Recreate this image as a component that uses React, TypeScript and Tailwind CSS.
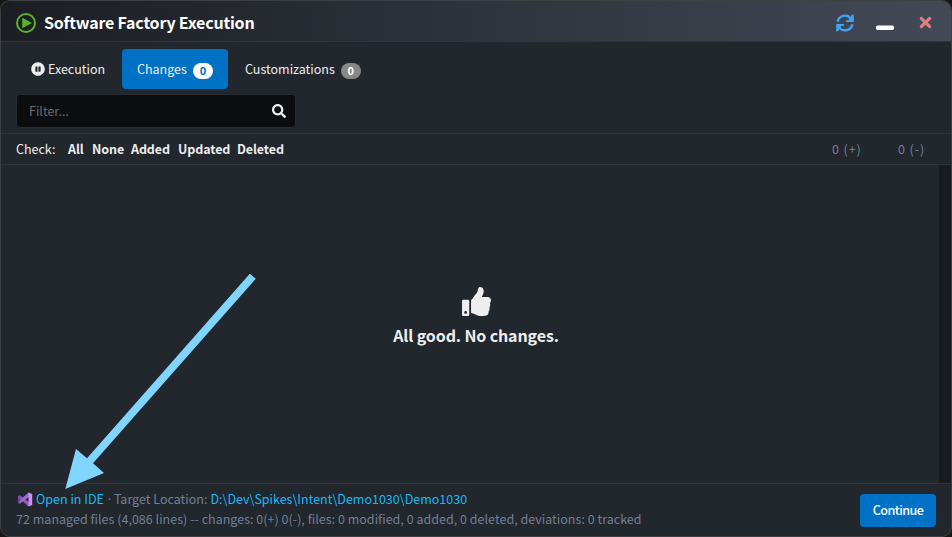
import React from "react";
import { FaPauseCircle, FaSearch, FaThumbsUp, FaTimes, FaWindowMinimize } from "react-icons/fa";

const checks = [
  { label: "All", width: "w-[24px]" },
  { label: "None", width: "w-[39px]" },
  { label: "Added", width: "w-[47px]" },
  { label: "Updated", width: "w-[59px]" },
  { label: "Deleted", width: "w-[60px]" },
];

function PlayIcon() {
  return (
    <svg className="h-5 w-5" viewBox="0 0 20 20">
      <circle cx="10" cy="10" r="9" fill="none" stroke="#57b42b" strokeWidth="2" />
      <path d="M6.2 4.8v10.4L16 10z" fill="#57b42b" />
    </svg>
  );
}

function RefreshIcon() {
  return (
    <svg className="h-[18px] w-[18px] text-[#3fa4f4]" viewBox="0 0 18 18">
      <path d="M1.6 7.8A7.4 7.4 0 0 1 14.8 4.6M16.4 10.2A7.4 7.4 0 0 1 3.2 13.4" fill="none" stroke="currentColor" strokeWidth="2.3" />
      <path d="M17.8.4v7.7h-7.9V6.6l2.8-.6 3-5.1zM.2 17.6V9.9h7.9v1.5l-2.8.6-3 5.1z" fill="currentColor" />
    </svg>
  );
}

function VisualStudioIcon() {
  return (
    <svg className="ml-[2px] h-[15px] w-[15px] shrink-0" viewBox="0 0 15 15">
      <path d="M0 4.2 1.8 3.2 13 11.5 10.5 14.5 0 5z" fill="#8a5bbd" />
      <path d="M0 10.8 1.8 11.8 13 3.5 10.5.5 0 10z" fill="#9a6bd0" />
      <path d="M0 4.2 1.8 3.2v8.6L0 10.8z" fill="#7547ab" />
      <path d="M10.5.5 14.2 2v11l-3.7 1.5z" fill="#c793fa" />
    </svg>
  );
}

export default function App() {
  return (
    <div className="h-[537px] w-[952px] overflow-hidden bg-[#191616] font-['Noto_Sans_CJK_JP','Noto_Sans_CJK_SC',sans-serif] text-[12.5px] leading-5 whitespace-nowrap text-[#eee]">
      <div className="relative flex h-full flex-col overflow-hidden rounded-[10px] border border-[#3e4043] bg-[#22262d]">
        <header className="flex h-[41px] shrink-0 items-center border-b border-[#30343c] bg-linear-to-r from-[#1b1e23] to-[#434956] pt-[3px] pl-[15px]">
          <PlayIcon />
          <h1 className="-mt-px ml-2 text-[16px] font-bold tracking-[-0.2px] text-white">Software Factory Execution</h1>
          <div className="ml-auto flex items-center pr-[19px]">
            <RefreshIcon />
            <FaWindowMinimize className="-mt-[2px] ml-[22px] h-[18px] w-[18px] text-white" />
            <FaTimes className="ml-[25px] h-[17px] w-[13px] text-[#e77c7c]" />
          </div>
        </header>

        <nav className="mt-[7px] flex h-10 shrink-0 items-center pl-[15px]">
          <button className="flex h-10 w-[106px] items-center pl-[15px]">
            <FaPauseCircle className="h-[14px] w-[14px]" />
            <span className="ml-[3px]">Execution</span>
          </button>
          <button className="flex h-10 w-[106px] items-center rounded-[4px] bg-[#0072c6] pl-[15px]">
            Changes
            <span className="mt-[3px] ml-[6px] flex h-4 w-5 items-center justify-center rounded-full bg-white pb-px text-[11px] font-bold text-[#0072c6]">0</span>
          </button>
          <button className="flex h-10 items-center pl-[17px]">
            Customizations
            <span className="mt-[3px] ml-[6px] flex h-4 w-5 items-center justify-center rounded-full bg-[#888] pb-px text-[11px] font-bold text-white">0</span>
          </button>
        </nav>

        <div className="mt-[5px] ml-[15px] flex h-[34px] w-[280px] shrink-0 items-center justify-between rounded-[4px] border border-[#272b34] bg-[#0b0d0e] pr-[9px] pl-3">
          <span className="text-[#6b6b6b]">Filter...</span>
          <FaSearch className="h-[14px] w-[14px]" />
        </div>

        <section className="mt-[5px] flex h-8 shrink-0 items-center border-y border-[#30343c] pl-[15px]">
          <span className="w-[52px]">Check:</span>
          {checks.map((c) => (
            <b key={c.label} className={`${c.width} tracking-[-0.1px]`}>{c.label}</b>
          ))}
          <span className="ml-auto w-[66px] tracking-[0.9px] text-[#718096]">0 (+)</span>
          <span className="w-[53px] tracking-[0.9px] text-[#718096]">0 (-)</span>
        </section>

        <main className="flex min-h-0 grow">
          <div className="-mr-3 flex grow flex-col items-center pt-[122px]">
            <FaThumbsUp className="h-[29px] w-[29px]" />
            <p className="mt-[7px] text-[16px] leading-6 font-bold tracking-[-0.12px]">All good. No changes.</p>
          </div>
          <div className="w-3 bg-[#181b1f]" />
        </main>

        <footer className="flex h-[53px] shrink-0 items-start justify-between border-t border-[#30343c] pr-[15px] pl-[15px] text-[#718096]">
          <div className="pt-[5px]">
            <div className="flex h-5 items-center">
              <VisualStudioIcon />
              <span className="ml-[3px] text-[#16b9f6]">Open in IDE</span>
              <span className="ml-[2px]">·</span>
              <span className="ml-px">Target Location:</span>
              <span className="ml-[3px] text-[#16b9f6]">D:\Dev\Spikes\Intent\Demo1030\Demo1030</span>
            </div>
            <div className="tracking-[0.018px]">72 managed files (4,086 lines) -- changes: 0(+) 0(-), files: 0 modified, 0 added, 0 deleted, deviations: 0 tracked</div>
          </div>
          <button className="mt-[10px] h-[33px] w-[76px] rounded-[4px] bg-[#0072c6] pb-[2px] font-medium tracking-[-0.5px] text-white">Continue</button>
        </footer>

        <svg className="pointer-events-none absolute top-[269px] left-[60px] h-[225px] w-[200px]" viewBox="61 270 200 225">
          <path d="M249.8 273.7 255.8 278.8 93 463.3 104 473 65.3 489 76 449 87 458.2z" fill="#80d5ff" />
        </svg>
      </div>
    </div>
  );
}
